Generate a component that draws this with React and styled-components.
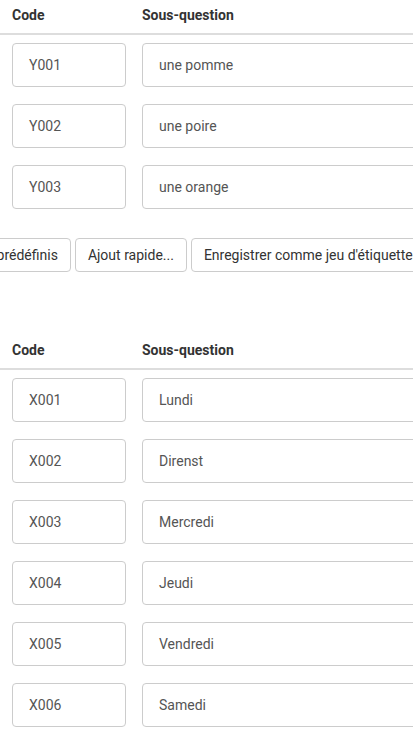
import React from 'react';
import styled, { createGlobalStyle } from 'styled-components';

const GlobalStyle = createGlobalStyle`
  html, body {
    margin: 0;
    padding: 0;
    background: #fff;
    overflow: hidden;
  }
  body {
    font-family: Roboto, "Liberation Sans", sans-serif;
    color: #333;
  }
`;

const Page = styled.div`
  width: 413px;
  overflow: hidden;
`;

const Section = styled.div`
  padding-left: 12px;
  margin-bottom: ${(p) => p.$mb || 0}px;
`;

const Grid = styled.div`
  display: grid;
  grid-template-columns: 114px 320px;
  column-gap: 16px;
`;

const HeadRow = styled(Grid)`
  height: 29px;
  padding-bottom: 4px;
  align-items: center;
  border-bottom: 2px solid #ddd;
  margin-left: -12px;
  padding-left: 12px;
  width: 600px;
`;

const HeadCell = styled.div`
  font-size: 14px;
  font-weight: 700;
  color: #333;
`;

const Row = styled(Grid)`
  padding: 8px 0 9px;
`;

const Field = styled.div`
  height: 44px;
  box-sizing: border-box;
  border: 1px solid #ccc;
  border-radius: 4px;
  padding: 0 16px;
  display: flex;
  align-items: center;
  font-size: 14px;
  color: #555;
  white-space: nowrap;
`;

const ButtonRow = styled.div`
  display: flex;
  gap: 4px;
  margin-top: 20px;
  margin-left: ${(p) => p.$offset}px;
  width: 700px;
`;

const Button = styled.button`
  height: 34px;
  box-sizing: border-box;
  border: 1px solid #ccc;
  border-radius: 4px;
  background: #fff;
  padding: 0 12px;
  font-family: Roboto, "Liberation Sans", sans-serif;
  font-size: 14px;
  color: #333;
  white-space: nowrap;
  flex: none;
`;

const fruits = [
  ['Y001', 'une pomme'],
  ['Y002', 'une poire'],
  ['Y003', 'une orange'],
];

const days = [
  ['X001', 'Lundi'],
  ['X002', 'Direnst'],
  ['X003', 'Mercredi'],
  ['X004', 'Jeudi'],
  ['X005', 'Vendredi'],
  ['X006', 'Samedi'],
];

const Table = ({ rows }) => (
  <>
    <HeadRow>
      <HeadCell>Code</HeadCell>
      <HeadCell>Sous-question</HeadCell>
    </HeadRow>
    {rows.map(([code, label]) => (
      <Row key={code}>
        <Field>{code}</Field>
        <Field>{label}</Field>
      </Row>
    ))}
  </>
);

const App = () => {
  return (
    <Page>
      <GlobalStyle />
      <Section $mb={63}>
        <Table rows={fruits} />
        <ButtonRow $offset={-73}>
          <Button>Labels prédéfinis</Button>
          <Button>Ajout rapide...</Button>
          <Button>Enregistrer comme jeu d'étiquettes</Button>
        </ButtonRow>
      </Section>
      <Section>
        <Table rows={days} />
      </Section>
    </Page>
  );
};

export default App;
